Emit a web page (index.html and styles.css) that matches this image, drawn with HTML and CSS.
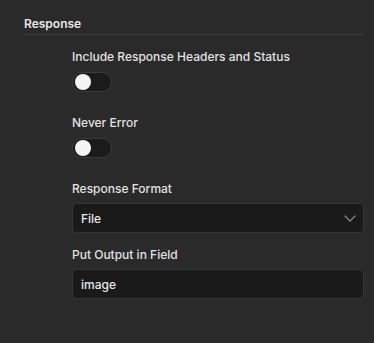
FILE: index.html
```html
<!DOCTYPE html>
<html lang="en">
<head>
    <meta charset="UTF-8">
    <meta name="viewport" content="width=device-width, initial-scale=1.0">
    <title>Response Settings</title>
    <link rel="stylesheet" href="styles.css">
</head>
<body>
    <div class="section">
        <h2 class="section-title">Response</h2>
        <div class="fields">
            <div class="field">
                <label class="field-label">Include Response Headers and Status</label>
                <div class="toggle"><span class="knob"></span></div>
            </div>
            <div class="field">
                <label class="field-label">Never Error</label>
                <div class="toggle"><span class="knob"></span></div>
            </div>
            <div class="field">
                <label class="field-label">Response Format</label>
                <div class="select">
                    <span>File</span>
                    <svg xmlns="http://www.w3.org/2000/svg" width="12" height="12" viewBox="0 0 12 12" fill="none" stroke="currentColor" stroke-width="1.2" stroke-linecap="round" stroke-linejoin="round">
                        <polyline points="1 4 6 9 11 4"></polyline>
                    </svg>
                </div>
            </div>
            <div class="field">
                <label class="field-label">Put Output in Field</label>
                <div class="input">image</div>
            </div>
        </div>
    </div>
</body>
</html>
```

FILE: styles.css
```css
* {
    margin: 0;
    padding: 0;
    box-sizing: border-box;
    font-family: Inter, 'Noto Sans', sans-serif;
}

body {
    background: #2a2a2a;
    color: #e6e6e6;
    min-height: 100vh;
}

.section {
    padding: 16px 10px 0 24px;
}

.section-title {
    font-size: 12px;
    font-weight: 600;
    line-height: 16px;
    color: #e8e8e8;
    padding-bottom: 2px;
    border-bottom: 1px solid #3b3b3b;
}

.fields {
    padding: 14px 0 0 48px;
    display: flex;
    flex-direction: column;
    gap: 13px;
}

.field {
    display: flex;
    flex-direction: column;
    align-items: flex-start;
}

.field-label {
    font-size: 12px;
    font-weight: 500;
    line-height: 16px;
    color: #e2e2e2;
    margin-bottom: 6px;
}

.toggle {
    width: 40px;
    height: 20px;
    margin-top: 1px;
    margin-bottom: 10px;
    border-radius: 10px;
    background: #1b1b1b;
    border: 1px solid #3c3c3c;
    display: flex;
    align-items: center;
    padding-left: 2px;
}

.knob {
    width: 16px;
    height: 16px;
    border-radius: 50%;
    background: #f4f4f4;
}

.select,
.input {
    width: 100%;
    height: 30px;
    background: #1a1a1a;
    border: 1px solid #363636;
    border-radius: 4px;
    display: flex;
    align-items: center;
    justify-content: space-between;
    padding: 0 7px 0 8px;
    font-size: 12px;
    font-weight: 500;
    color: #e8e8e8;
}

.select {
    margin-bottom: 1px;
}

.select svg {
    color: #8a8a8a;
}
```
